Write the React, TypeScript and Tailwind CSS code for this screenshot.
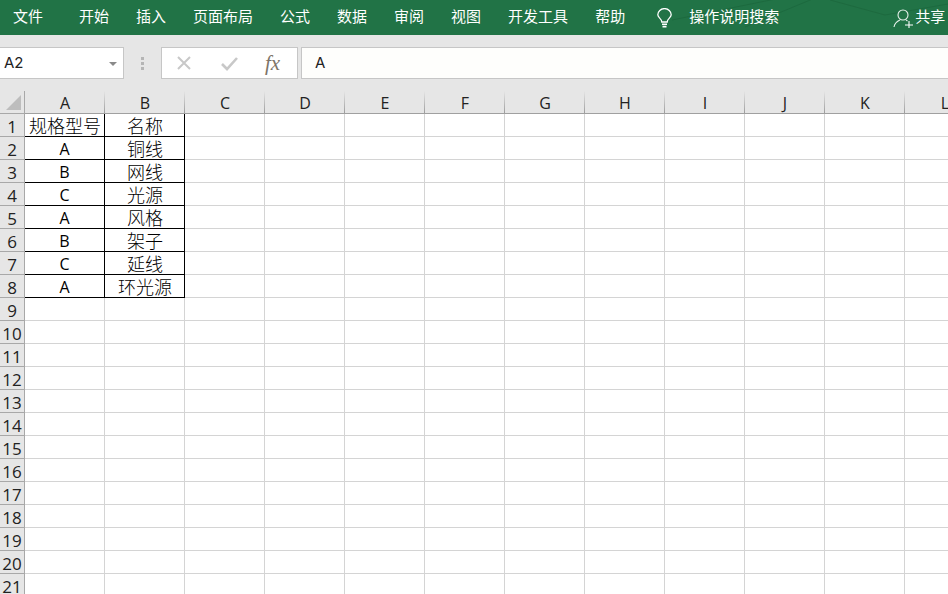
const tabs = ["开始", "插入", "页面布局", "公式", "数据", "审阅", "视图", "开发工具", "帮助"];
const columns = ["A", "B", "C", "D", "E", "F", "G", "H", "I", "J", "K", "L"];
const rows = Array.from({ length: 21 }, (_, i) => i + 1);

const data: Record<number, [string, string]> = {
  1: ["规格型号", "名称"],
  2: ["A", "铜线"],
  3: ["B", "网线"],
  4: ["C", "光源"],
  5: ["A", "风格"],
  6: ["B", "架子"],
  7: ["C", "延线"],
  8: ["A", "环光源"],
};

const uiFont = "font-['Inter','Noto_Sans_CJK_SC',sans-serif]";
const cellFont = "font-['Open_Sans','Noto_Sans_CJK_SC',sans-serif]";

function Cell({ row, col }: { row: number; col: number }) {
  const text = col < 2 ? data[row]?.[col] : undefined;
  const boxed = col < 2 && row <= 8;
  const latin = col === 0 && row > 1;
  return (
    <div
      className={[
        "flex items-center justify-center overflow-hidden border-r border-b leading-none text-black",
        boxed ? "border-black" : "border-[#d4d4d4]",
        latin ? "pt-[1px] text-[16px]" : "pt-[2px] pl-[1px] text-[18px] font-light",
      ].join(" ")}
    >
      {text}
    </div>
  );
}

export default function App() {
  return (
    <div className={`relative h-[594px] w-[948px] overflow-hidden bg-white ${uiFont}`}>
      <header className="relative flex h-[35px] items-center bg-[#217346] pl-[13px] text-[15px] text-white">
        <svg className="absolute inset-0" width="948" height="35" fill="none" stroke="#1d6a3f" strokeWidth="1">
          <path d="M672 20 L810 -8 M745 27 L815 -2 M830 0 L885 15 M885 15 L948 4" />
        </svg>
        <span className="relative w-[66px]">文件</span>
        <nav className="relative flex gap-[27px]">
          {tabs.map((tab) => (
            <span key={tab}>{tab}</span>
          ))}
        </nav>
        <svg className="relative ml-[32px]" width="15" height="20" viewBox="0 0 15 20" fill="none" stroke="white" strokeWidth="1.3">
          <path d="M4.8 14 C4.8 10.5 0.8 9.8 0.8 6.8 A6.7 6.2 0 0 1 14.2 6.8 C14.2 9.8 10.2 10.5 10.2 14 Z" />
          <path d="M5 16.2 H10 M5.5 18.6 H9.5" strokeWidth="1.6" />
        </svg>
        <span className="relative ml-[17px]">操作说明搜索</span>
        <svg className="relative ml-[114px]" width="22" height="20" viewBox="0 0 22 20" fill="none" stroke="#e6f0ea" strokeWidth="1.1">
          <circle cx="10" cy="7" r="5" />
          <path d="M1 19 C2 14 5 13 7 12 M13 12 L14.5 13" />
          <path d="M12 17 H20 M16 13 V21" stroke="white" />
        </svg>
        <span className="relative whitespace-nowrap">共享</span>
      </header>

      <div className="flex h-[56px] items-start bg-[#e6e6e6] pt-[12px]">
        <div className="flex h-[32px] w-[124px] items-center justify-between border border-l-0 border-[#c6c6c6] bg-white pt-[1px] pr-[6px] pl-[4px] text-[15px] text-[#222]">
          <span>A2</span>
          <span className="h-0 w-0 border-x-[4px] border-t-[4px] border-x-transparent border-t-[#8a8a8a]" />
        </div>
        <div className="ml-[17px] flex h-[32px] flex-col items-center justify-center gap-[2px]">
          <span className="h-[3px] w-[3px] bg-[#b5b5b5]" />
          <span className="h-[3px] w-[3px] bg-[#b5b5b5]" />
          <span className="h-[3px] w-[3px] bg-[#b5b5b5]" />
        </div>
        <div className="ml-[17px] flex h-[32px] w-[137px] items-center border border-[#c6c6c6] bg-white">
          <svg className="ml-[14px]" width="16" height="16" viewBox="0 0 16 16" stroke="#c8c8c8" strokeWidth="2">
            <path d="M2 2 L14 14 M14 2 L2 14" />
          </svg>
          <svg className="ml-[29px]" width="18" height="16" viewBox="0 0 18 16" fill="none" stroke="#c8c8c8" strokeWidth="2.6">
            <path d="M1 9 L6 14 L16 3" />
          </svg>
          <span className="ml-[26px] font-['Liberation_Serif',serif] text-[21px] leading-none text-[#7d7468] italic">
            fx
          </span>
        </div>
        <div className="ml-[3px] flex h-[32px] flex-1 items-center border-y border-l border-[#c6c6c6] bg-[#fefefc] pl-[13px] text-[15px] text-[#222]">
          A
        </div>
      </div>

      <div className={`grid grid-cols-[25px_repeat(12,80px)] grid-rows-[23px_repeat(21,23px)] ${cellFont}`}>
        <div className="relative border-r border-b border-[#a8a8a8] bg-[#e6e6e6]">
          <svg className="absolute top-[4px] left-[6px]" width="15" height="15">
            <path d="M15 0 V15 H0 Z" fill="#bdbdbd" />
          </svg>
        </div>
        {columns.map((c) => (
          <div
            key={c}
            className="flex items-center justify-center border-b border-[#a0a0a0] bg-[#e6e6e6] bg-[linear-gradient(#e6e6e6,#9c9c9c)] bg-[size:1px_100%] bg-right bg-no-repeat pt-[1px] text-[16px] leading-none text-[#222]"
          >
            {c}
          </div>
        ))}
        {rows.map((r) => (
          <div key={r} className="contents">
            <div className="flex items-center justify-center overflow-hidden border-r border-b border-[#a8a8a8] bg-[#e6e6e6] pt-[2px] text-[17px] leading-none text-[#222]">
              {r}
            </div>
            {columns.map((c, i) => (
              <Cell key={c} row={r} col={i} />
            ))}
          </div>
        ))}
      </div>
    </div>
  );
}
